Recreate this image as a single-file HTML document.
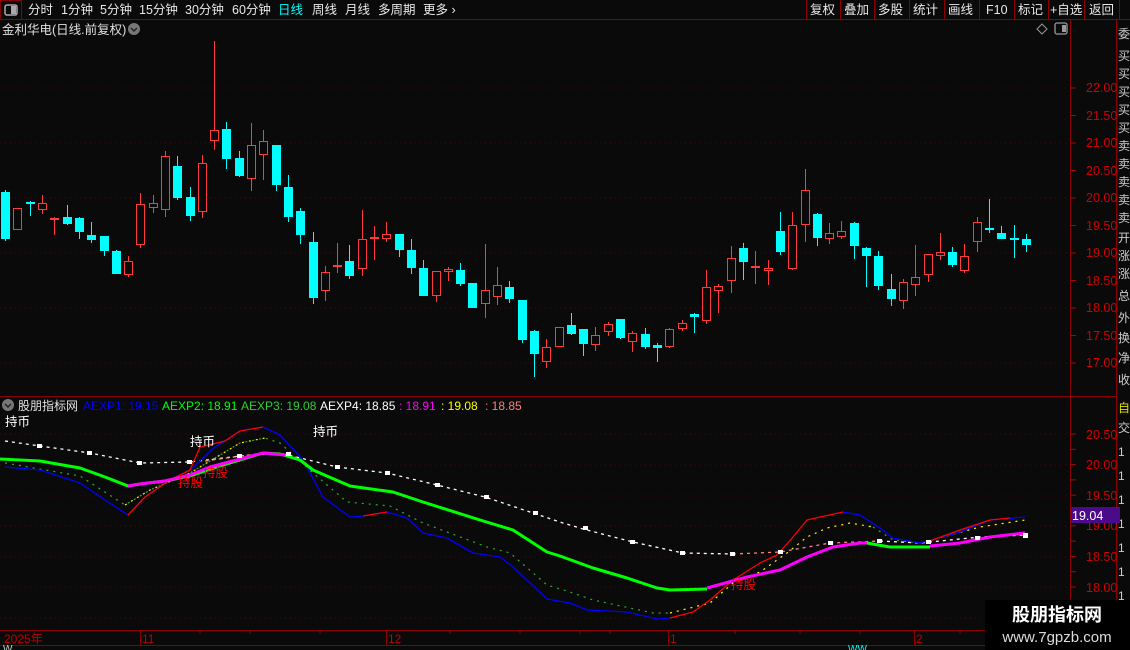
<!DOCTYPE html>
<html><head><meta charset="utf-8"><style>
html,body{margin:0;padding:0;background:#0a0a0a;}
svg{display:block;}
text{font-family:"Liberation Sans","Noto Sans CJK SC",sans-serif;}
</style></head><body>
<svg id="s" width="1130" height="650" viewBox="0 0 1130 650" xmlns="http://www.w3.org/2000/svg">
<rect width="1130" height="650" fill="#0a0a0a"/>
<rect x="0.5" y="0.5" width="21" height="19" fill="none" stroke="#8b0000"/>
<rect x="5" y="5" width="12" height="10" rx="2" fill="none" stroke="#aaa" stroke-width="1.5"/>
<rect x="11" y="6" width="5" height="8" fill="#aaa"/>
<line x1="0" y1="19.5" x2="1130" y2="19.5" stroke="#8b0000"/>
<g font-size="12.5" fill="#e8e8e8">
<text x="28" y="14">分时</text><text x="61" y="14">1分钟</text><text x="100" y="14">5分钟</text>
<text x="139" y="14">15分钟</text><text x="185" y="14">30分钟</text><text x="232" y="14">60分钟</text>
<text x="278" y="14" fill="#00ffff">日线</text><text x="312" y="14">周线</text><text x="345" y="14">月线</text>
<text x="378" y="14">多周期</text><text x="423" y="14">更多 ›</text>
</g>
<g stroke="#8b0000"><line x1="806.5" y1="0" x2="806.5" y2="19"/><line x1="840.5" y1="0" x2="840.5" y2="19"/><line x1="874.5" y1="0" x2="874.5" y2="19"/><line x1="909.5" y1="0" x2="909.5" y2="19"/><line x1="944.5" y1="0" x2="944.5" y2="19"/><line x1="979.5" y1="0" x2="979.5" y2="19"/><line x1="1014.5" y1="0" x2="1014.5" y2="19"/><line x1="1048.5" y1="0" x2="1048.5" y2="19"/><line x1="1084.5" y1="0" x2="1084.5" y2="19"/><line x1="1119.5" y1="0" x2="1119.5" y2="19"/></g>
<g font-size="12.5" fill="#e8e8e8">
<text x="810" y="14">复权</text><text x="844" y="14">叠加</text><text x="878" y="14">多股</text><text x="913" y="14">统计</text><text x="948" y="14">画线</text><text x="986" y="14">F10</text><text x="1018" y="14">标记</text><text x="1050" y="14">+自选</text><text x="1089" y="14">返回</text>
</g>
<text x="2" y="34" font-size="12.5" fill="#e0e0e0">金利华电(日线.前复权)</text>
<circle cx="134" cy="29" r="6" fill="#777"/><path d="M131 28l3 3 3-3" stroke="#222" fill="none" stroke-width="1.5"/>
<path d="M1042 24l5 5-5 5-5-5z" fill="none" stroke="#999"/>
<rect x="1055" y="23" width="12" height="11" rx="2" fill="none" stroke="#999" stroke-width="1.3"/><rect x="1062" y="25" width="4" height="7" fill="#999"/>
<line x1="1070.5" y1="20" x2="1070.5" y2="646" stroke="#8b0000"/>
<line x1="1116.5" y1="20" x2="1116.5" y2="650" stroke="#8b0000"/>
<line x1="0" y1="396.5" x2="1116" y2="396.5" stroke="#8b0000"/>
<line x1="0" y1="630.5" x2="1116" y2="630.5" stroke="#8b0000"/>
<line x1="0" y1="645.5" x2="1116" y2="645.5" stroke="#8b0000"/>
<g stroke="#5a0000" stroke-dasharray="1 4">
<line x1="0" y1="88" x2="1070" y2="88"/><line x1="0" y1="143" x2="1070" y2="143"/><line x1="0" y1="198" x2="1070" y2="198"/><line x1="0" y1="253" x2="1070" y2="253"/><line x1="0" y1="308" x2="1070" y2="308"/><line x1="0" y1="363" x2="1070" y2="363"/>
</g>
<g font-size="12.5" fill="#d00000">
<text x="1086" y="92">22.00</text><text x="1086" y="120">21.50</text><text x="1086" y="147">21.00</text><text x="1086" y="175">20.50</text><text x="1086" y="202">20.00</text><text x="1086" y="230">19.50</text><text x="1086" y="257">19.00</text><text x="1086" y="285">18.50</text><text x="1086" y="312">18.00</text><text x="1086" y="340">17.50</text><text x="1086" y="367">17.00</text>
</g>
<g stroke="#b00000" id="ticks1"></g>
<g font-size="12" fill="#ccc">
<text x="1118" y="38">委</text><text x="1118" y="60">买</text><text x="1118" y="78">买</text><text x="1118" y="96">买</text><text x="1118" y="114">买</text><text x="1118" y="132">买</text><text x="1118" y="150">卖</text><text x="1118" y="168">卖</text><text x="1118" y="186">卖</text><text x="1118" y="204">卖</text><text x="1118" y="222">卖</text><text x="1118" y="242">开</text><text x="1118" y="260">涨</text><text x="1118" y="278">涨</text><text x="1118" y="300">总</text><text x="1118" y="322">外</text><text x="1118" y="342">换</text><text x="1118" y="362">净</text><text x="1118" y="384">收</text>
<text x="1118" y="412" fill="#dd0">自</text><text x="1118" y="432">交</text>
<text x="1118" y="456">1</text><text x="1118" y="480">1</text><text x="1118" y="504">1</text><text x="1118" y="528">1</text><text x="1118" y="552">1</text><text x="1118" y="576">1</text><text x="1118" y="600">1</text>
</g>
<g id="candles"></g>
<circle cx="8" cy="405" r="6" fill="#777"/><path d="M5 404l3 3 3-3" stroke="#222" fill="none" stroke-width="1.5"/>
<g font-size="12" >
<text x="18" y="410" fill="#e0e0e0">股朋指标网</text>
<text x="83" y="410" fill="#0000ff">AEXP1: 19.15</text>
<text x="162" y="410" fill="#00ff00">AEXP2: 18.91</text>
<text x="241" y="410" fill="#33cc33">AEXP3: 19.08</text>
<text x="320" y="410" fill="#ffffff">AEXP4: 18.85</text>
<text x="399" y="410" fill="#ff00ff">: 18.91</text>
<text x="441" y="410" fill="#ffff00">: 19.08</text>
<text x="485" y="410" fill="#ff7f7f">: 18.85</text>
</g>
<g stroke="#5a0000" stroke-dasharray="1 4">
<line x1="0" y1="434" x2="1070" y2="434"/><line x1="0" y1="465" x2="1070" y2="465"/><line x1="0" y1="496" x2="1070" y2="496"/><line x1="0" y1="526" x2="1070" y2="526"/><line x1="0" y1="557" x2="1070" y2="557"/><line x1="0" y1="587" x2="1070" y2="587"/><line x1="0" y1="618" x2="1070" y2="618"/>
</g>
<g font-size="12.5" fill="#d00000">
<text x="1086" y="439">20.50</text><text x="1086" y="469">20.00</text><text x="1086" y="500">19.50</text><text x="1086" y="530">19.00</text><text x="1086" y="561">18.50</text><text x="1086" y="592">18.00</text>
</g>
<g stroke="#b00000" id="ticks2"></g>
<rect x="1071" y="507" width="49" height="16" fill="#4b0a8a"/>
<text x="1072" y="520" font-size="12.5" fill="#fff">19.04</text>
<g fill="none" stroke-linejoin="round">
<polyline stroke="#fff" stroke-width="1.3" stroke-dasharray="3 4" points="5,441 40,446 90,453 140,463 190,462 240,456 280,453 337,467 387,473 437,485 485,497 533,513 563,523 583,529 633,542 683,553 733,554"/>
<polyline stroke="#ff8080" stroke-width="1.3" stroke-dasharray="3 4" points="205,461 263,453"/>
<polyline stroke="#ff8080" stroke-width="1.3" stroke-dasharray="3 4" points="733,554 780,552 830,543 880,541"/>
<polyline stroke="#fff" stroke-width="1.3" stroke-dasharray="3 4" points="880,541 920,543 980,537 1025,535"/>
<polyline stroke="#33aa33" stroke-width="1.2" stroke-dasharray="2 5" points="5,463 80,476 125,505 150,490 190,473 240,443 265,438 280,443 313,473 347,502 390,506 423,523 487,547 510,553 547,585 570,592 593,600 653,613 670,613"/>
<polyline stroke="#ffff00" stroke-width="1.2" stroke-dasharray="2 5" points="125,505 150,490 190,473 240,443 265,438"/>
<polyline stroke="#ffff00" stroke-width="1.2" stroke-dasharray="2 5" points="670,613 710,603 733,583 760,572 787,553 807,537 827,528 850,523 873,527"/>
<polyline stroke="#33aa33" stroke-width="1.2" stroke-dasharray="2 5" points="873,527 893,540 920,543"/>
<polyline stroke="#ffff00" stroke-width="1.2" stroke-dasharray="2 5" points="920,543 980,527 1025,520"/>
<polyline stroke="#0000ff" stroke-width="1.3" points="5,467 40,470 80,483 105,500 128,515 145,497 170,480 190,470 215,447 240,431 263,427 280,435 303,460 323,497 350,517 363,516 387,512 407,518 423,533 447,538 473,553 500,557 513,567 547,599 570,603 587,610 627,612 657,619 670,618"/>
<polyline stroke="#ff0000" stroke-width="1.3" points="128,515 145,497 170,480 190,470 200,447 225,441 240,431 263,427"/>
<polyline stroke="#ff0000" stroke-width="1.3" points="363,516 387,512"/>
<polyline stroke="#ff0000" stroke-width="1.3" points="670,618 693,612 710,600 733,580 760,563 777,555 793,537 807,520 820,517 843,512"/>
<polyline stroke="#0000ff" stroke-width="1.3" points="843,512 860,515 880,528 893,538 920,543 960,532 990,520 1025,517"/>
<polyline stroke="#ff0000" stroke-width="1.3" points="930,541 960,530 990,520 1010,518"/>
<polyline stroke="#00ff00" stroke-width="3" points="0,459 40,461 80,468 105,477 128,486 140,484 165,481 190,476 220,466 263,453 280,454 300,460 313,470 350,486 393,492 423,502 480,520 513,530 547,552 560,556 593,568 627,578 657,588 670,590 707,589"/>
<polyline stroke="#ff00ff" stroke-width="3" points="128,486 140,484 165,481 190,475 210,467 263,453 285,455"/>
<polyline stroke="#ff00ff" stroke-width="3" points="707,588 747,577 780,570 807,557 833,547 860,543 867,543"/>
<polyline stroke="#00ff00" stroke-width="3" points="867,543 890,547 930,547"/>
<polyline stroke="#ff00ff" stroke-width="3" points="930,546 960,543 990,537 1025,533"/>
</g>
<g fill="#fff">
<rect x="37" y="444" width="5" height="4"/><rect x="87" y="451" width="5" height="4"/><rect x="137" y="461" width="5" height="4"/><rect x="187" y="460" width="5" height="4"/><rect x="237" y="454" width="5" height="4"/><rect x="286" y="452" width="5" height="4"/><rect x="335" y="465" width="5" height="4"/><rect x="385" y="471" width="5" height="4"/><rect x="435" y="483" width="5" height="4"/><rect x="484" y="495" width="5" height="4"/><rect x="533" y="511" width="5" height="4"/><rect x="583" y="526" width="5" height="4"/><rect x="630" y="540" width="5" height="4"/><rect x="680" y="551" width="5" height="4"/><rect x="730" y="552" width="5" height="4"/><rect x="778" y="550" width="5" height="4"/><rect x="828" y="541" width="5" height="4"/><rect x="877" y="539" width="5" height="4"/><rect x="926" y="540" width="5" height="4"/><rect x="975" y="536" width="5" height="4"/><rect x="1023" y="533" width="5" height="5"/>
</g>
<g font-size="12.5">
<text x="5" y="426" fill="#fff">持币</text><text x="190" y="446" fill="#fff">持币</text><text x="313" y="436" fill="#fff">持币</text>
<text x="178" y="487" fill="#ff0000">持股</text><text x="203" y="477" fill="#ff0000">持股</text><text x="731" y="589" fill="#ff0000">持股</text>
</g>
<g stroke="#8b0000"><line x1="140.5" y1="630" x2="140.5" y2="645"/><line x1="386.5" y1="630" x2="386.5" y2="645"/><line x1="668.5" y1="630" x2="668.5" y2="645"/><line x1="914.5" y1="630" x2="914.5" y2="645"/></g>
<g stroke="#8b0000" id="ticks3"></g>
<g font-size="12" fill="#c00000">
<text x="4" y="643">2025年</text><text x="142" y="643">11</text><text x="388" y="643">12</text><text x="670" y="643">1</text><text x="916" y="643">2</text>
</g>
<g font-size="10" fill="#ccc"><text x="3" y="652">W</text><text x="848" y="652" fill="#0ff">WW</text></g>
<rect x="985" y="600" width="145" height="50" fill="#000"/>
<text x="1057" y="621" font-size="18" font-weight="bold" fill="#fff" text-anchor="middle">股朋指标网</text>
<text x="1057" y="642" font-size="15" fill="#ddd" text-anchor="middle">www.7gpzb.com</text>
</svg>
<script>
var C=[
[5.3,'c',190,192,239,241],[17.3,'r',208,208,230,230],[30.3,'c',201,202,203,216],[42.3,'r',195,203,210,214],[54.3,'r',217,218,220,235],[67.3,'c',205,217,224,225],[79.3,'c',217,218,232,239],[91.3,'c',222,235,240,243],[104.3,'c',236,236,251,256],[116.3,'c',250,251,274,274],[128.3,'r',256,261,275,277],[140.3,'r',193,204,245,248],[153.3,'r',195,203,208,213],[165.3,'r',151,156,210,217],[177.3,'c',156,166,198,200],[190.3,'c',187,197,216,221],[202.3,'r',155,163,212,218],[214.3,'r',41,130,141,150],[226.3,'c',122,129,159,169],[239.3,'c',151,158,176,177],[251.3,'r',123,145,179,191],[263.3,'r',130,141,155,180],[276.3,'c',145,145,185,191],[288.3,'c',175,187,217,222],[300.3,'c',208,211,235,244],[313.3,'c',232,242,298,304],[325.3,'r',266,272,291,301],[337.3,'r',243,265,267,273],[349.3,'c',245,261,276,279],
[362.3,'r',210,239,269,276],[374.3,'r',226,237,239,260],[386.3,'r',222,234,239,242],[399.3,'c',234,234,250,257],[411.3,'c',239,250,268,274],[423.3,'c',260,268,296,296],[436.3,'r',271,271,296,302],[448.3,'r',267,269,272,281],[460.3,'c',263,270,284,286],[472.3,'c',283,283,308,308],[485.3,'r',244,290,304,318],[497.3,'r',267,285,297,305],[509.3,'c',281,287,299,303],[522.3,'c',300,300,340,343],[534.3,'c',330,331,354,377],[546.3,'r',339,347,362,368],[559.3,'r',327,327,347,347],[571.3,'c',313,325,334,335],[583.3,'c',329,329,344,356],[595.3,'r',327,335,345,351],[608.3,'r',322,324,332,336],[620.3,'c',319,319,338,339],[632.3,'r',331,333,342,352],[645.3,'c',328,334,347,349],[657.3,'c',343,345,348,362],[669.3,'r',328,329,347,348],[682.3,'r',320,323,329,331],[694.3,'c',313,314,317,333],[706.3,'r',270,287,321,324],
[718.3,'r',284,286,291,313],[731.3,'r',246,258,281,293],[743.3,'c',243,248,262,280],[755.3,'r',251,266,268,284],[768.3,'r',260,268,271,285],[780.3,'c',212,231,252,255],[792.3,'r',212,225,269,270],[805.3,'r',169,190,225,242],[817.3,'c',213,214,238,246],[829.3,'r',223,233,239,244],[841.3,'r',221,231,237,239],[854.3,'c',222,223,246,259],[866.3,'c',247,248,256,287],[878.3,'c',251,256,286,290],[891.3,'c',274,289,299,306],[903.3,'r',279,282,301,309],[915.3,'r',245,277,285,296],[928.3,'r',254,254,275,282],[940.3,'r',233,252,256,260],[952.3,'c',247,252,265,267],[964.3,'r',244,256,271,273],[977.3,'r',217,222,242,252],[989.3,'c',199,228,229,233],[1001.3,'c',226,233,239,239],[1014.3,'c',225,238,239,258],[1026.3,'c',234,239,245,252]];
var ns='http://www.w3.org/2000/svg',g=document.getElementById('candles');
function el(t,a){var e=document.createElementNS(ns,t);for(var k in a)e.setAttribute(k,a[k]);return e;}
C.forEach(function(c){var x=Math.round(c[0]),col=c[1]=='c'?'#00ffff':'#ff3a3a';
g.appendChild(el('line',{x1:x+.5,y1:c[2],x2:x+.5,y2:c[5],stroke:col}));
var h=Math.max(c[4]-c[3],1);
if(c[1]=='c'){g.appendChild(el('rect',{x:x-4,y:c[3],width:9,height:Math.max(h,2),fill:col}));}
else{ if(h<3)g.appendChild(el('rect',{x:x-4,y:c[3],width:9,height:2,fill:col}));
else g.appendChild(el('rect',{x:x-3.5,y:c[3]+.5,width:8,height:h-1,fill:'#0a0a0a',stroke:col}));}
});
function ticks(id,ys,x1,x2){var t=document.getElementById(id);ys.forEach(function(y){t.appendChild(el('line',{x1:x1,y1:y,x2:x2,y2:y}));});}
var a=[];for(var y=88;y<=380;y+=27.5)a.push(y);ticks('ticks1',a,1070,1076);
var b=[];for(var y=434;y<=625;y+=15.3)b.push(y);ticks('ticks2',b,1070,1076);
var t3=document.getElementById('ticks3');[200,250,320,450,520,580,610,735,800,860,960,1010,1060].forEach(function(x){t3.appendChild(el('line',{x1:x,y1:630,x2:x,y2:634}));});
</script>
</body></html>
